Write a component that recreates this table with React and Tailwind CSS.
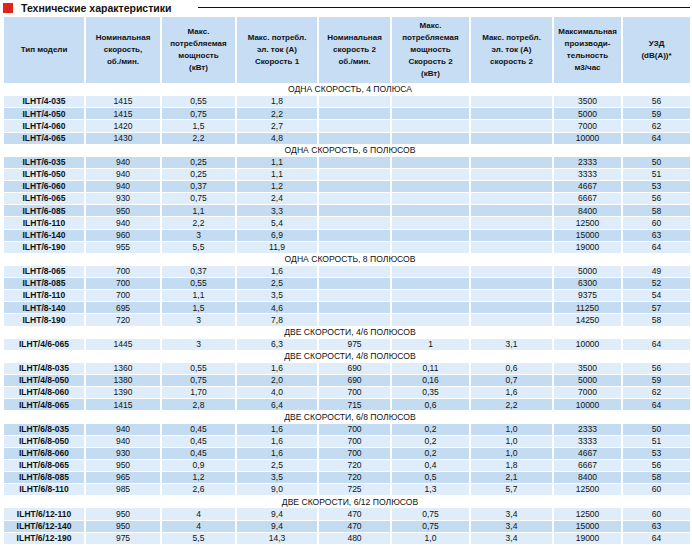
import React from "react";

const cols =
  "grid grid-cols-[80px_74px_73px_80px_71px_77px_81px_67px_67px] gap-x-[2px]";

const headers = [
  ["Тип модели"],
  ["Номинальная", "скорость,", "об./мин."],
  ["Макс.", "потребляемая", "мощность", "(кВт)"],
  ["Макс. потребл.", "эл. ток (А)", "Скорость 1"],
  ["Номинальная", "скорость 2", "об./мин."],
  ["Макс.", "потребляемая", "мощность", "Скорость 2", "(кВт)"],
  ["Макс. потребл.", "эл. ток (А)", "скорость 2"],
  ["Максимальная", "производи-", "тельность", "м3/час"],
  ["УЗД", "(dB(A))*"],
];

const sections = [
  {
    title: "ОДНА СКОРОСТЬ, 4 ПОЛЮСА",
    rows: [
      ["ILHT/4-035", "1415", "0,55", "1,8", "", "", "", "3500", "56"],
      ["ILHT/4-050", "1415", "0,75", "2,2", "", "", "", "5000", "59"],
      ["ILHT/4-060", "1420", "1,5", "2,7", "", "", "", "7000", "62"],
      ["ILHT/4-065", "1430", "2,2", "4,8", "", "", "", "10000", "64"],
    ],
  },
  {
    title: "ОДНА СКОРОСТЬ, 6 ПОЛЮСОВ",
    rows: [
      ["ILHT/6-035", "940", "0,25", "1,1", "", "", "", "2333", "50"],
      ["ILHT/6-050", "940", "0,25", "1,1", "", "", "", "3333", "51"],
      ["ILHT/6-060", "940", "0,37", "1,2", "", "", "", "4667", "53"],
      ["ILHT/6-065", "930", "0,75", "2,4", "", "", "", "6667", "56"],
      ["ILHT/6-085", "950", "1,1", "3,3", "", "", "", "8400", "58"],
      ["ILHT/6-110", "940", "2,2", "5,4", "", "", "", "12500", "60"],
      ["ILHT/6-140", "960", "3", "6,9", "", "", "", "15000", "63"],
      ["ILHT/6-190", "955", "5,5", "11,9", "", "", "", "19000", "64"],
    ],
  },
  {
    title: "ОДНА СКОРОСТЬ, 8 ПОЛЮСОВ",
    rows: [
      ["ILHT/8-065", "700", "0,37", "1,6", "", "", "", "5000", "49"],
      ["ILHT/8-085", "700", "0,55", "2,5", "", "", "", "6300", "52"],
      ["ILHT/8-110", "700", "1,1", "3,5", "", "", "", "9375", "54"],
      ["ILHT/8-140", "695", "1,5", "4,6", "", "", "", "11250", "57"],
      ["ILHT/8-190", "720", "3", "7,8", "", "", "", "14250", "58"],
    ],
  },
  {
    title: "ДВЕ СКОРОСТИ, 4/6 ПОЛЮСОВ",
    rows: [["ILHT/4/6-065", "1445", "3", "6,3", "975", "1", "3,1", "10000", "64"]],
  },
  {
    title: "ДВЕ СКОРОСТИ, 4/8 ПОЛЮСОВ",
    rows: [
      ["ILHT/4/8-035", "1360", "0,55", "1,6", "690", "0,11", "0,6", "3500", "56"],
      ["ILHT/4/8-050", "1380", "0,75", "2,0", "690", "0,16", "0,7", "5000", "59"],
      ["ILHT/4/8-060", "1390", "1,70", "4,0", "700", "0,35", "1,6", "7000", "62"],
      ["ILHT/4/8-065", "1415", "2,8", "6,4", "715", "0,6", "2,2", "10000", "64"],
    ],
  },
  {
    title: "ДВЕ СКОРОСТИ, 6/8 ПОЛЮСОВ",
    rows: [
      ["ILHT/6/8-035", "940", "0,45", "1,6", "700", "0,2", "1,0", "2333", "50"],
      ["ILHT/6/8-050", "940", "0,45", "1,6", "700", "0,2", "1,0", "3333", "51"],
      ["ILHT/6/8-060", "930", "0,45", "1,6", "700", "0,2", "1,0", "4667", "53"],
      ["ILHT/6/8-065", "950", "0,9", "2,5", "720", "0,4", "1,8", "6667", "56"],
      ["ILHT/6/8-085", "965", "1,2", "3,5", "720", "0,5", "2,1", "8400", "58"],
      ["ILHT/6/8-110", "985", "2,6", "9,0", "725", "1,3", "5,7", "12500", "60"],
    ],
  },
  {
    title: "ДВЕ СКОРОСТИ, 6/12 ПОЛЮСОВ",
    rows: [
      ["ILHT/6/12-110", "950", "4", "9,4", "470", "0,75", "3,4", "12500", "60"],
      ["ILHT/6/12-140", "950", "4", "9,4", "470", "0,75", "3,4", "15000", "63"],
      ["ILHT/6/12-190", "975", "5,5", "14,3", "480", "1,0", "3,4", "19000", "64"],
    ],
  },
];

export default function App() {
  // stripes run through the whole table, section titles included
  let idx = 0;
  const body = [];
  sections.forEach((s) => {
    body.push(
      <div
        key={"t" + idx}
        className="h-[11.13px] flex items-center justify-center leading-none text-[8.6px] text-[#111] pl-[4px]"
      >
        {s.title}
      </div>
    );
    idx++;
    s.rows.forEach((r) => {
      const bg = idx % 2 === 1 ? "bg-[#deedf9]" : "bg-[#c4dcf2]";
      body.push(
        <div key={"r" + idx} className={cols + " h-[11.13px]"}>
          {r.map((c, i) => (
            <div
              key={i}
              className={
                bg +
                " flex items-center justify-center leading-none text-[8.5px] text-[#111]" +
                (i === 0 ? " font-bold" : "")
              }
            >
              {c}
            </div>
          ))}
        </div>
      );
      idx++;
    });
  });

  return (
    <div className="w-[692px] h-[545px] bg-white overflow-hidden font-['Liberation_Sans',Arial,sans-serif]">
      {/* Title */}
      <div className="h-[17px] flex items-start pt-[3px]">
        <div className="w-[10px] h-[10px] bg-[#e2231a] ml-[3px] shrink-0" />
        <div className="ml-[8px] text-[10.5px] font-bold leading-[10px] text-[#111] whitespace-nowrap">
          Технические характеристики
        </div>
        <div className="flex-1 h-px bg-[#111] ml-[26px] mr-[2px] mt-[4px]" />
      </div>

      <div className="flex flex-col gap-y-px pl-[4px]">
        {/* Header */}
        <div className={cols + " h-[66px]"}>
          {headers.map((h, i) => (
            <div
              key={i}
              className="bg-[#c6ddf3] flex flex-col items-center justify-center text-center text-[8px] font-bold leading-[12px] text-[#111]"
            >
              {h.map((l, j) => (
                <span key={j}>{l}</span>
              ))}
            </div>
          ))}
        </div>
        {body}
      </div>
    </div>
  );
}
